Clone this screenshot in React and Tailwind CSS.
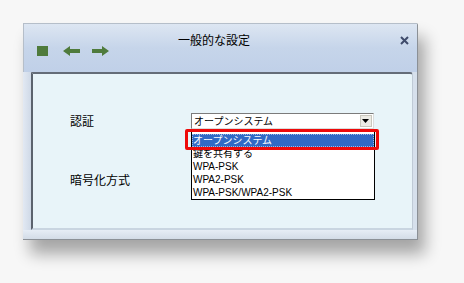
import React from "react";

const items = ["オープンシステム", "鍵を共有する", "WPA-PSK", "WPA2-PSK", "WPA-PSK/WPA2-PSK"];

function ArrowIcon({ dir }) {
  return (
    <svg width="17" height="10" viewBox="0 0 17 10" className={dir === "right" ? "-scale-x-100" : ""}>
      <path d="M0 5 L7 0 L7 3 L17 3 L17 7 L7 7 L7 10 Z" fill="#4f7b3c" />
    </svg>
  );
}

function App() {
  return (
    <div
      className="w-[464px] h-[283px] bg-[#f7f7f7] pt-[23px] pl-[23px] overflow-hidden"
      style={{ fontFamily: '"Noto Sans CJK JP", "Liberation Sans", sans-serif' }}
    >
      <div className="w-[395px] h-[217px] flex flex-col bg-[#dbe4f0] border-r border-b border-[#8b9096] rounded-tr-[2px] shadow-[7px_14px_16px_rgba(0,0,0,0.33)]">
        {/* title bar */}
        <div className="h-[49px] flex items-start bg-gradient-to-b from-[#dde6f2] via-[#c6d5ea] to-[#c0d0e8] border-t border-l border-[#b5bec9]">
          <div className="self-end mb-[16px] ml-[13px] flex items-center">
            <div className="w-[11px] h-[10px] bg-[#4f7b3c]" />
            <div className="ml-[15px]">
              <ArrowIcon dir="left" />
            </div>
            <div className="ml-[12px]">
              <ArrowIcon dir="right" />
            </div>
          </div>
          <div className="ml-[69px] mt-[9px] text-[12px] leading-[14px] text-black">一般的な設定</div>
          <div className="flex-1" />
          <div className="mt-[12px] mr-[8px]">
            <svg width="9" height="9" viewBox="0 0 9 9">
              <path d="M1 1 L8 8 M8 1 L1 8" stroke="#3f4b6b" strokeWidth="2" />
            </svg>
          </div>
        </div>

        {/* body */}
        <div className="flex h-[158px]">
          <div className="w-[8px] bg-gradient-to-r from-[#e2e9f3] to-[#cfd9e7]" />
          <div className="w-[383px] bg-[#e8f4f9] border-t-2 border-l-2 border-t-[#646c78] border-l-[#5b636e] border-r border-r-[#bfcad6] border-b-2 border-b-[#c9d5e1] rounded-tr-[3px] pt-[39px] pl-[37px]">
            <div className="flex items-center h-[16px]">
              <div className="w-[121px] text-[12px] leading-[14px] text-black">認証</div>
              <div className="relative w-[183px] h-[16px] bg-white border-t border-l border-[#7b7b7b] border-r border-b border-r-[#dcdcdc] border-b-[#dcdcdc] flex items-center">
                <div className="flex-1 pl-[2px] text-[10px] leading-[12px] text-black">オープンシステム</div>
                <div className="w-[12px] h-[12px] mr-[1px] bg-[#ecebe5] border border-[#c9c7bd] flex items-center justify-center">
                  <svg width="7" height="4" viewBox="0 0 7 4">
                    <path d="M0 0 L7 0 L3.5 4 Z" fill="#000" />
                  </svg>
                </div>

                {/* dropdown list */}
                <div
                  className="absolute left-[-1px] top-[15px] w-[184px] h-[71px] bg-white border border-black pt-[4px] z-10"
                  style={{ fontFamily: '"Liberation Sans", "Noto Sans CJK JP", sans-serif' }}
                >
                  {items.map((it, i) => (
                    <div
                      key={it}
                      className={
                        i === 0
                          ? "h-[13px] leading-[13px] text-[10px] pl-[1px] bg-[#316ac5] text-white outline outline-1 outline-dotted outline-[#9fb9e6] -outline-offset-1"
                          : "h-[13px] leading-[13px] text-[10px] pl-[1px] text-black"
                      }
                    >
                      {it}
                    </div>
                  ))}
                </div>
                {/* highlight marker */}
                <div className="absolute left-[-7px] top-[15px] w-[194px] h-[21px] border-[3px] border-[#ee0a0a] rounded-[2px] z-20" />
              </div>
            </div>
            <div className="mt-[43px] flex items-center h-[16px]">
              <div className="text-[12px] leading-[14px] text-black">暗号化方式</div>
            </div>
          </div>
          <div className="w-[4px] bg-[#d6e0ec]" />
        </div>
        <div className="flex-1 bg-gradient-to-b from-[#e6edf5] to-[#d3dce7]" />
      </div>
    </div>
  );
}

export default App;
